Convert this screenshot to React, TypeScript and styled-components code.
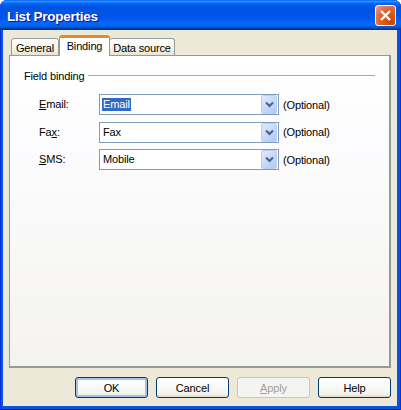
import styled, { createGlobalStyle } from "styled-components";

const Global = createGlobalStyle`
  html, body { margin: 0; padding: 0; background: #fff; }
  body { font-family: "Liberation Sans", Arial, sans-serif; font-size: 11px; letter-spacing: -0.15px; color: #000; }
`;

const Win = styled.div`
  width: 401px;
  height: 410px;
  display: flex;
  flex-direction: column;
  border-radius: 7px 7px 0 0;
  overflow: hidden;
  background: #0855dd;
  box-shadow: inset 1px 0 #0831d9, inset -1px 0 #0831d9, inset 0 -1px #00138c;
`;

const TitleBar = styled.div`
  height: 30px;
  flex: none;
  display: flex;
  align-items: center;
  justify-content: space-between;
  padding: 0 5px 0 7px;
  background: linear-gradient(180deg, #0058ee 0, #3593ff 4%, #288eff 6%, #127dff 8%, #036ffc 10%, #0262ee 14%, #0057e5 20%, #0054e3 24%, #0055eb 56%, #005bf5 66%, #026afe 76%, #0062ef 86%, #0052d6 92%, #0040ab 94%, #003092 100%);
`;

const Title = styled.div`
  font-family: "Liberation Sans", Arial, sans-serif;
  font-weight: 700;
  font-size: 13.5px;
  letter-spacing: -0.25px;
  padding-top: 2px;
  color: #fff;
  text-shadow: 1px 1px 1px #0f1089;
`;

const CloseBtn = styled.div`
  width: 21px;
  height: 21px;
  box-sizing: border-box;
  border: 1px solid #fff;
  border-radius: 3px;
  background: radial-gradient(circle at 85% 85%, #cc4600 0, #dc6527 55%, #e5765a 75%, #e8a58f 100%);
  display: flex;
  align-items: center;
  justify-content: center;
`;

const Client = styled.div`
  flex: 1;
  margin: 0 4px 4px 3px;
  background: #ece9d8;
  padding: 6px 6px 0 6px;
  display: flex;
  flex-direction: column;
`;

const TabRow = styled.div`
  display: flex;
  align-items: flex-end;
  height: 20px;
  padding-left: 2px;
  position: relative;
  z-index: 1;
  margin-bottom: -1px;
`;

const Tab = styled.div<{ $active?: boolean; $first?: boolean; $w: number }>`
  box-sizing: border-box;
  height: ${(p) => (p.$active ? 21 : 18)}px;
  width: ${(p) => p.$w}px;
  display: flex;
  align-items: center;
  justify-content: center;
  border: 1px solid #919b9c;
  border-bottom: ${(p) => (p.$active ? "none" : "1px solid #919b9c")};
  border-radius: 3px 3px 0 0;
  background: ${(p) => (p.$active ? "#fff" : "linear-gradient(180deg, #fff, #f3f1e8 70%, #e6e3d4)")};
  ${(p) => (p.$active ? "border-top: 3px solid #e68b2c; padding-bottom: 2px;" : "border-left: none; padding-top: 1px;")}
  ${(p) => (p.$first ? "border-left: 1px solid #919b9c;" : "")}
`;

const Panel = styled.div`
  box-sizing: border-box;
  width: 382px;
  height: 313px;
  border: 1px solid #919b9c;
  border-right-width: 2px;
  border-bottom-width: 2px;
  background: linear-gradient(180deg, #ffffff 0, #fcfcfe 30%, #f4f3ee 100%);
  padding: 11px 14px 0 14px;
`;

const GroupHead = styled.div`
  display: flex;
  align-items: center;
  height: 16px;
  gap: 4px;
`;

const GroupLabel = styled.span`
  margin-top: 2px;
`;

const GroupLine = styled.div`
  flex: 1;
  height: 1px;
  background: #a9a89c;
`;

const Rows = styled.div`
  display: flex;
  flex-direction: column;
  gap: 6px;
  margin-top: 11px;
  padding-left: 15px;
`;

const Row = styled.div`
  display: grid;
  grid-template-columns: 60px 180px auto;
  align-items: center;
  height: 21.5px;
`;

const FieldLabel = styled.span`
  padding-bottom: 1px;
`;

const Combo = styled.div`
  box-sizing: border-box;
  height: 21px;
  width: 180px;
  border: 1px solid #7f9db9;
  background: #fff;
  display: flex;
  align-items: center;
  justify-content: space-between;
  padding: 0 0 0 2px;
`;

const ComboText = styled.span<{ $sel?: boolean }>`
  padding: 0 1px;
  line-height: 13px;
  ${(p) => (p.$sel ? "background: #316ac5; color: #fff;" : "")}
`;

const Arrow = styled.div`
  box-sizing: border-box;
  width: 16px;
  height: 19px;
  margin-right: 1px;
  border: 1px solid #bccdf0;
  border-radius: 2px;
  background: linear-gradient(135deg, #e1eafe, #aec8f7);
  display: flex;
  align-items: center;
  justify-content: center;
`;

const Hint = styled.span`
  margin-left: 4px;
`;

const Footer = styled.div`
  display: flex;
  gap: 8px;
  padding: 9px 0 0 66px;
`;

const Btn = styled.div<{ $disabled?: boolean; $default?: boolean }>`
  box-sizing: border-box;
  width: 73px;
  height: 21px;
  display: flex;
  align-items: center;
  justify-content: center;
  border-radius: 3px;
  border: 1px solid ${(p) => (p.$disabled ? "#c9c7ba" : "#003c74")};
  color: ${(p) => (p.$disabled ? "#a19f92" : "#000")};
  background: ${(p) => (p.$disabled ? "#f4f4f0" : "linear-gradient(180deg, #fff, #f3f3ee 85%, #dcd8ca)")};
  ${(p) => (p.$default ? "box-shadow: inset 0 0 0 2px #a9c0ea, inset 0 -2px #8cb0e8;" : "")}
`;

const fields = [
  { pre: "", key: "E", post: "mail:", value: "Email", sel: true },
  { pre: "Fa", key: "x", post: ":", value: "Fax" },
  { pre: "", key: "S", post: "MS:", value: "Mobile" },
];

const Chevron = () => (
  <svg width="9" height="7" viewBox="0 0 9 7">
    <path d="M1 1.5 L4.5 5 L8 1.5" fill="none" stroke="#4d6185" strokeWidth="2" />
  </svg>
);

export default function App() {
  return (
    <Win>
      <Global />
      <TitleBar>
        <Title>List Properties</Title>
        <CloseBtn>
          <svg width="13" height="13" viewBox="0 0 13 13">
            <path d="M2 2 L11 11 M11 2 L2 11" stroke="#fff" strokeWidth="2.4" />
          </svg>
        </CloseBtn>
      </TitleBar>
      <Client>
        <TabRow>
          <Tab $w={48} $first>General</Tab>
          <Tab $w={51} $active>Binding</Tab>
          <Tab $w={65}>Data source</Tab>
        </TabRow>
        <Panel>
          <GroupHead>
            <GroupLabel>Field binding</GroupLabel>
            <GroupLine />
          </GroupHead>
          <Rows>
            {fields.map((f) => (
              <Row key={f.value}>
                <FieldLabel>
                  {f.pre}
                  <u>{f.key}</u>
                  {f.post}
                </FieldLabel>
                <Combo>
                  <ComboText $sel={f.sel}>{f.value}</ComboText>
                  <Arrow>
                    <Chevron />
                  </Arrow>
                </Combo>
                <Hint>(Optional)</Hint>
              </Row>
            ))}
          </Rows>
        </Panel>
        <Footer>
          <Btn $default>OK</Btn>
          <Btn>Cancel</Btn>
          <Btn $disabled>
            <span>
              <u>A</u>pply
            </span>
          </Btn>
          <Btn>Help</Btn>
        </Footer>
      </Client>
    </Win>
  );
}
